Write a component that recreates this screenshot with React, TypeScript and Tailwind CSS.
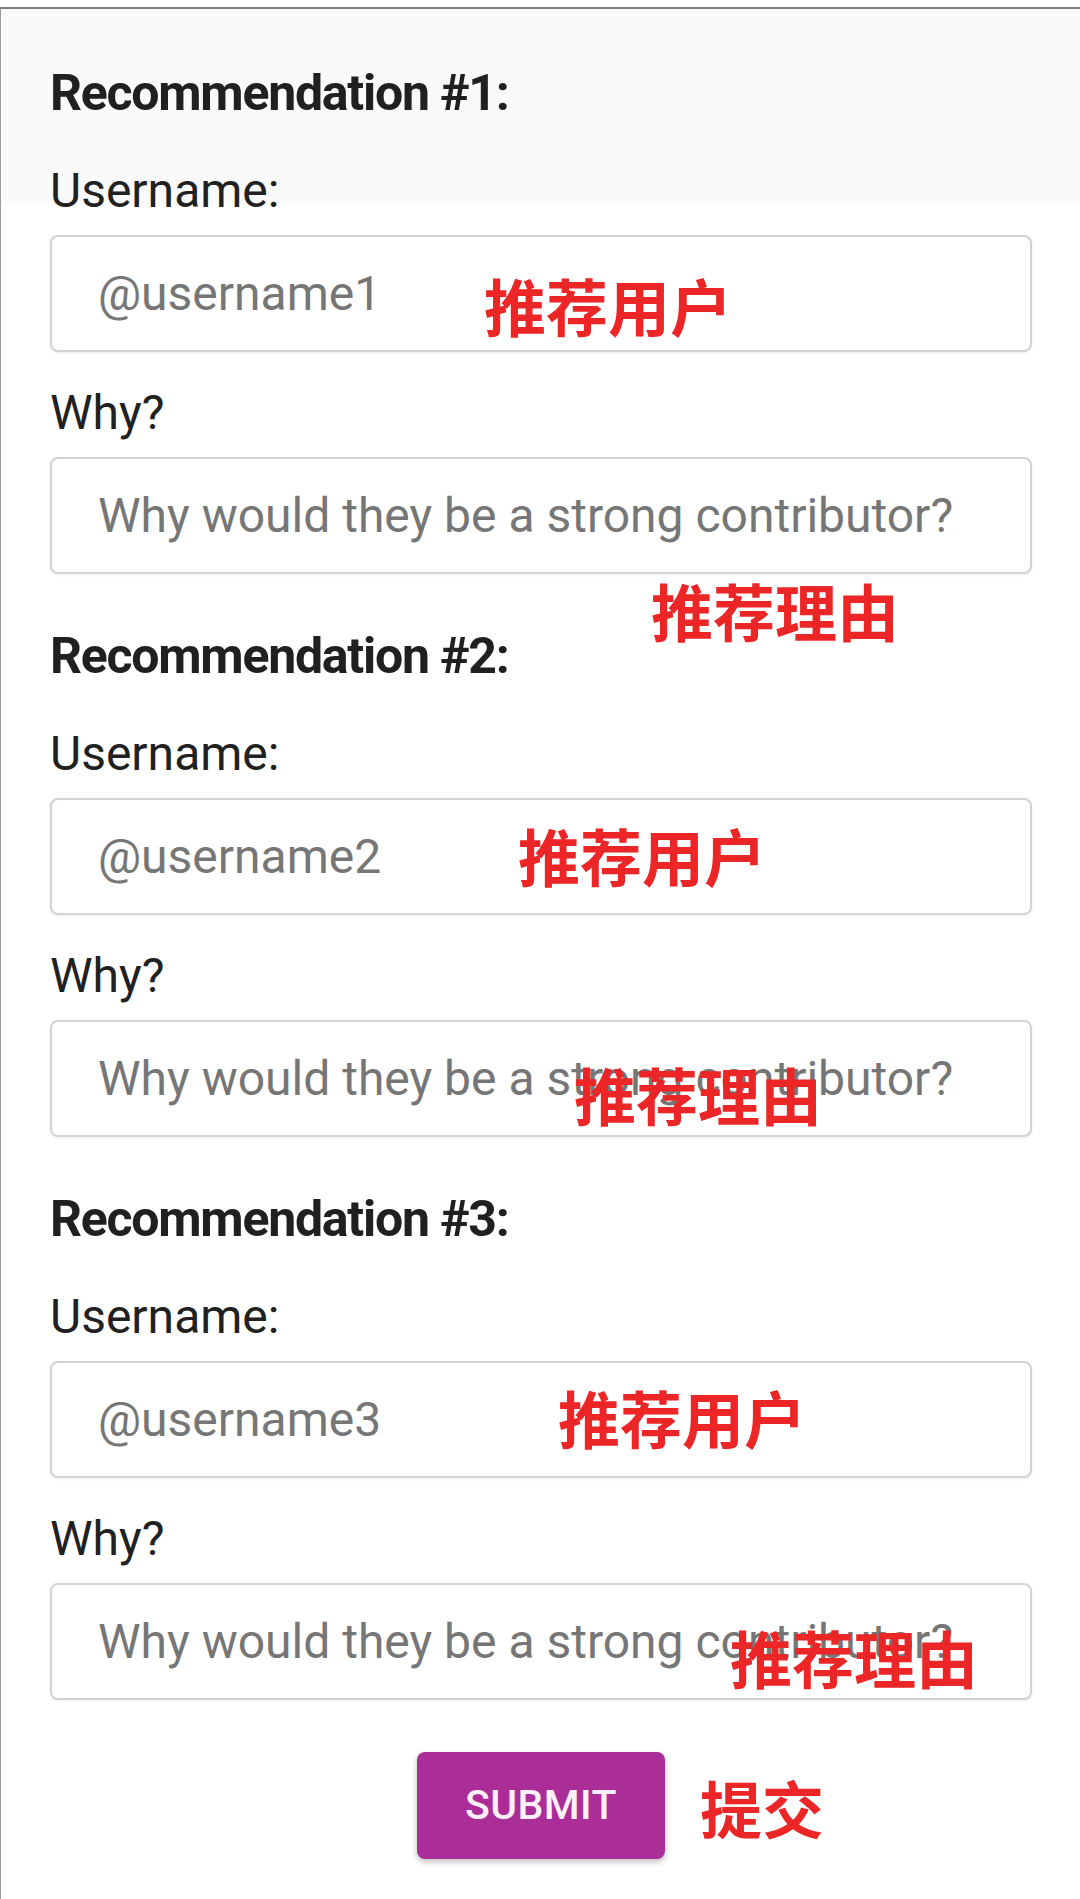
import React from "react";

const note =
  "pointer-events-none absolute whitespace-nowrap font-['Noto_Sans_CJK_SC',sans-serif] text-[62px] leading-[62px] font-bold text-[#ec2527]";

const inputCls =
  "block h-[117px] w-full rounded-[8px] border-2 border-[#d3d3d3] bg-white pl-[46px] text-[48px] text-[#212121] shadow-[0_1px_3px_rgba(0,0,0,0.08)] outline-none placeholder:text-[#767676]";

const labelCls = "block h-[48px] text-[48px] leading-[48px] text-[#212121]";

type Rec = { n: number; userNote: string; whyNote: string };

const recs: Rec[] = [
  { n: 1, userNote: "left-[434px] top-[39px]", whyNote: "left-[601px] top-[122px]" },
  { n: 2, userNote: "left-[468px] top-[26px]", whyNote: "left-[524px] top-[43px]" },
  { n: 3, userNote: "left-[508px] top-[25px]", whyNote: "left-[680px] top-[43px]" },
];

function Section({ rec }: { rec: Rec }) {
  return (
    <section className="flex flex-col">
      <h2 className="h-[50px] text-[50px] leading-[50px] font-bold tracking-[-0.025em] text-[#202020]">
        Recommendation #{rec.n}:
      </h2>
      <label className={`mt-[49px] ${labelCls}`}>Username:</label>
      <div className="relative mt-[20px]">
        <input className={inputCls} placeholder={`@username${rec.n}`} />
        <span className={`${note} ${rec.userNote}`}>推荐用户</span>
      </div>
      <label className={`mt-[37px] ${labelCls}`}>Why?</label>
      <div className="relative mt-[20px]">
        <input className={inputCls} placeholder="Why would they be a strong contributor?" />
        <span className={`${note} ${rec.whyNote}`}>推荐理由</span>
      </div>
    </section>
  );
}

export default function App() {
  return (
    <div className="flex h-[1899px] w-[1080px] flex-col overflow-hidden bg-white font-[Roboto,sans-serif]">
      <div className="h-[7px] shrink-0 bg-white" />
      <div className="h-[2px] shrink-0 bg-[#7d7d7d]" />
      <main className="flex flex-1 flex-col gap-[57px] border-l border-[#9a9a9a] bg-[linear-gradient(to_bottom,#fafafa_0px,#fafafa_192px,#ffffff_196px)] pl-[49px] pr-[48px] pt-[59px]">
        {recs.map((r) => (
          <Section key={r.n} rec={r} />
        ))}
        <div className="-mt-[5px] flex justify-center">
          <div className="relative">
            <button className="h-[107px] w-[248px] rounded-[8px] bg-[#ab2d97] text-[41px] font-medium tracking-[0.01em] text-[#fdf0fb] shadow-[0_3px_6px_rgba(0,0,0,0.25)]">
              SUBMIT
            </button>
            <span className={`${note} left-[283px] top-[24px]`}>提交</span>
          </div>
        </div>
      </main>
    </div>
  );
}
